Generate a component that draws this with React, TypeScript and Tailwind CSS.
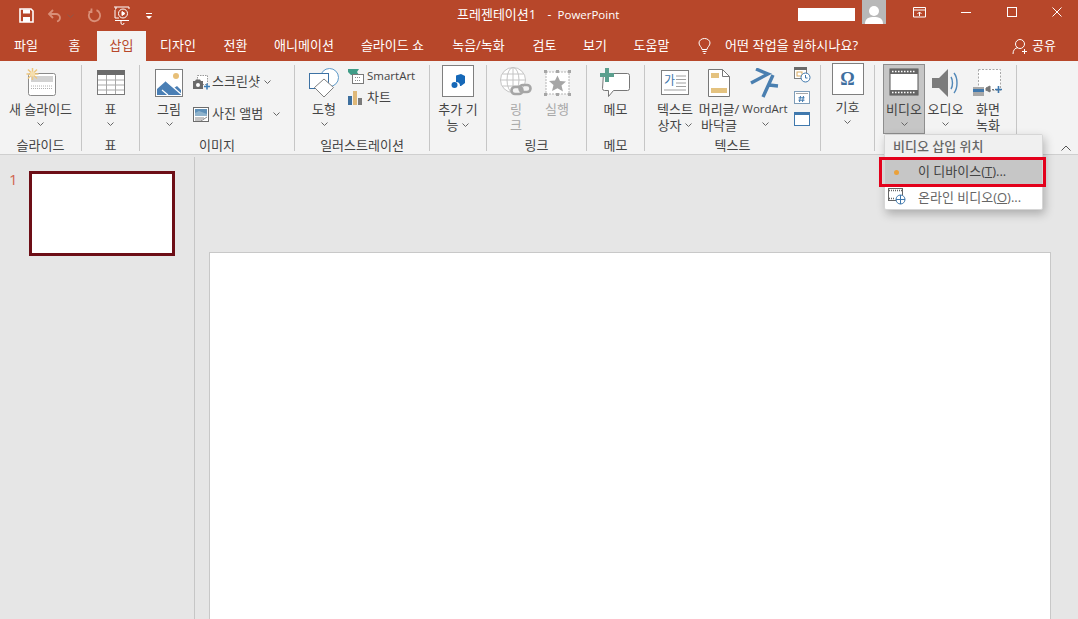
import type { ReactNode } from 'react'

const TABS = [
  { label: '파일', w: 'w-[52px]' },
  { label: '홈', w: 'w-[45px]' },
  { label: '삽입', w: 'w-[49px]', active: true },
  { label: '디자인', w: 'w-[64px]' },
  { label: '전환', w: 'w-[51px]' },
  { label: '애니메이션', w: 'w-[86px]' },
  { label: '슬라이드 쇼', w: 'w-[91px]' },
  { label: '녹음/녹화', w: 'w-[81px]' },
  { label: '검토', w: 'w-[51px]' },
  { label: '보기', w: 'w-[50px]' },
  { label: '도움말', w: 'w-[63px]' },
]

function Chev({ className = '' }: { className?: string }) {
  return (
    <svg width="7" height="4" viewBox="0 0 7 4" className={className} fill="none" stroke="#666" strokeWidth="1">
      <path d="M0.5 0.5 3.5 3.5 6.5 0.5" />
    </svg>
  )
}

function TitleBar() {
  return (
    <div className="flex h-[31px] items-start text-white">
      <div className="flex w-[457px] items-center pl-[19px] pt-[6px]">
        <svg width="15" height="15" viewBox="0 0 15 15">
          <path d="M1 1h11l2 2v11H1z" fill="none" stroke="#fff" strokeWidth="1.6" />
          <path d="M4 1.5h7v4H4zM4 9h7v5H4z" fill="#fff" />
        </svg>
        <svg width="16" height="14" viewBox="0 0 16 14" className="ml-[13px]" fill="none" stroke="#d98f78" strokeWidth="1.8">
          <path d="M6 1 2 5l4 4M2 5h7a4 4 0 0 1 4 4v0a4 4 0 0 1-3 3.500" />
        </svg>
        <Chev className="ml-[4px] opacity-50" />
        <svg width="15" height="15" viewBox="0 0 15 15" className="ml-[13px]" fill="none" stroke="#d98f78" strokeWidth="1.8">
          <path d="M9.500 2.200A5.700 5.700 0 1 1 4 3M4.500 0.500V4H1.500" />
        </svg>
        <svg width="18" height="19" viewBox="0 0 18 19" className="ml-[11px]" fill="none" stroke="#fff" strokeWidth="1">
          <path d="M1 1h15M3 1v2h-1M16 1v2" />
          <circle cx="10" cy="7.500" r="4.500" />
          <path d="M9 5.500v4l3-2z" fill="#fff" />
          <path d="M2 4v8h4M2 14.500h14M8 15v2a1.500 1.500 0 0 0 3 0" />
        </svg>
        <svg width="8" height="8" viewBox="0 0 8 8" className="ml-[14px]" fill="#fff">
          <path d="M1 1h6v1H1zM1 4h6L4 7z" />
        </svg>
      </div>
      <div className="flex items-center whitespace-pre pt-[6px] text-[13px] leading-[17px]">
        프레젠테이션1
        <span className="ml-[5px] text-[12px]">{'  -  '}</span>
        <span className="text-[11.5px]">PowerPoint</span>
      </div>
      <div className="ml-auto flex items-start">
        <div className="mt-[8px] h-[13px] w-[57px] bg-white" />
        <div className="ml-[7px] flex h-[24px] w-[24px] items-end justify-center overflow-hidden bg-[#b8b8b8]">
          <svg width="20" height="21" viewBox="0 0 20 21" fill="#fff">
            <circle cx="10" cy="8" r="5" />
            <path d="M1 21c0-6 4-7 9-7s9 1 9 7z" />
          </svg>
        </div>
        <svg width="14" height="11" viewBox="0 0 14 11" className="ml-[27px] mt-[7px]" fill="none" stroke="#fff" strokeWidth="1">
          <path d="M.5 .5h12v9.500h-12zM.5 3h12M6.500 9V5M4.500 7l2-2 2 2" />
        </svg>
        <div className="ml-[34px] mt-[12px] h-px w-[10px] bg-white" />
        <div className="ml-[36px] mt-[7px] h-[10px] w-[10px] border border-white" />
        <svg width="10" height="10" viewBox="0 0 10 10" className="ml-[35px] mr-[16px] mt-[7px]" stroke="#fff" strokeWidth="1">
          <path d="M.5 .5l9 9M9.500 .5l-9 9" />
        </svg>
      </div>
    </div>
  )
}

function TabBar() {
  return (
    <div className="flex h-[30px] text-white">
      {TABS.map((t) => (
        <div
          key={t.label}
          className={`${t.w} flex shrink-0 items-center justify-center text-[13px] ${t.active ? 'bg-[#f3f3f3] text-[#b7472a]' : ''}`}
        >
          {t.label}
        </div>
      ))}
      <svg width="13" height="16" viewBox="0 0 13 16" className="ml-[15px] mt-[7px]" fill="none" stroke="#fff" strokeWidth="1">
        <path d="M4 11.500C4 9 1 8 1 5a5.500 4.500 0 0 1 11 0c0 3-3 4-3 6.500zM4.500 13.500h4M5.500 15.500h2" />
      </svg>
      <div className="ml-[14px] flex items-center text-[13px] tracking-[0.1px]">어떤 작업을 원하시나요?</div>
      <div className="ml-auto mr-[22px] flex items-center">
        <svg width="16" height="17" viewBox="0 0 16 17" fill="none" stroke="#fff" strokeWidth="1">
          <circle cx="8" cy="6" r="4.500" />
          <path d="M1 16c0-4 2-6 5-6.500M10 13.500h5M12.500 11v5" />
        </svg>
        <span className="ml-[4px] text-[13px]">공유</span>
      </div>
    </div>
  )
}

function Group({ w, label, children }: { w: string; label?: string; children: ReactNode }) {
  return (
    <div className={`${w} flex h-[86px] shrink-0 flex-col border-r border-[#c6c6c6]`}>
      <div className="flex h-[71px]">{children}</div>
      <div className="flex h-[15px] items-center justify-center pt-[3px] text-[13px] leading-none">{label}</div>
    </div>
  )
}

function Big({
  w,
  icon,
  lines,
  chev,
  inlineChev,
  muted,
  boxed,
  latin,
}: {
  w: string
  icon: ReactNode
  lines: string[]
  chev?: boolean
  inlineChev?: boolean
  muted?: boolean
  boxed?: boolean
  latin?: boolean
}) {
  return (
    <div
      className={`${w} flex shrink-0 flex-col items-center ${muted ? 'text-[#a8a8a8]' : ''} ${
        boxed ? '-mt-px h-[70px] border border-[#8e8e8e] bg-[#c6c6c6]' : ''
      }`}
    >
      <div className="mb-px flex h-[35px] shrink-0 items-center justify-center">{icon}</div>
      {lines.map((l, i) => (
        <div key={l} className={`flex h-[16px] items-center whitespace-nowrap leading-none ${latin ? 'text-[11.5px]' : 'text-[13px]'}`}>
          {l}
          {inlineChev && i === lines.length - 1 && <Chev className="ml-[4px]" />}
        </div>
      ))}
      {chev && (
        <div className="flex h-[14px] items-center">
          <Chev />
        </div>
      )}
    </div>
  )
}

function Small({ icon, label, chevGap, latin }: { icon: ReactNode; label: string; chevGap?: string; latin?: boolean }) {
  return (
    <div className={`flex h-[20px] items-center whitespace-nowrap ${latin ? 'text-[11.5px]' : 'text-[13px]'}`}>
      <span className="flex w-[19px] shrink-0">{icon}</span>
      {label}
      {chevGap && <Chev className={chevGap} />}
    </div>
  )
}

const NewSlideIcon = (
  <svg width="30" height="29" viewBox="0 0 30 29">
    <rect x="2.500" y="5.500" width="27" height="22" rx="2" fill="#fff" stroke="#8a8a8a" />
    <rect x="5" y="8" width="22" height="6" fill="#d2d2d2" />
    <path d="M5 18h22M5 20.500h22" stroke="#b0b0b0" strokeDasharray="1 1" />
    <g stroke="#eec77f" strokeWidth="1.500">
      <path d="M6.500 0v12M.500 6h12M2 1.500l9 9M11 1.500l-9 9" />
    </g>
    <circle cx="6.500" cy="6" r="2.500" fill="#f6dfae" />
  </svg>
)

const TableIcon = (
  <svg width="28" height="25" viewBox="0 0 28 25">
    <rect x=".5" y=".5" width="27" height="24" fill="#fff" stroke="#7a7a7a" />
    <rect x="0" y="0" width="28" height="5" fill="#6b6b6b" />
    <path d="M9.500 5v19M18.500 5v19M1 10h26M1 15h26M1 20h26" stroke="#a8a8a8" />
  </svg>
)

const PictureIcon = (
  <svg width="28" height="28" viewBox="0 0 28 28">
    <rect x=".5" y=".5" width="27" height="27" fill="#fff" stroke="#7d7d7d" />
    <circle cx="21" cy="7" r="3" fill="#e7bf78" />
    <path d="M2 26v-6l9-8 8 7 3-2 4 4v5z" fill="#4a7fb5" />
    <path d="M13 26l-6-5M11 12l15 13" stroke="#fff" strokeWidth="1.200" fill="none" />
  </svg>
)

const ScreenshotIcon = (
  <svg width="17" height="15" viewBox="0 0 17 15">
    <rect x="4.500" y=".5" width="10" height="9" fill="#fff" stroke="#9a9a9a" strokeDasharray="1.500 1" />
    <path d="M0 6h2l1-1.500h4L8 6h2v8H0z" fill="#6a6a6a" />
    <circle cx="5" cy="10" r="2" fill="#fff" />
    <path d="M11 11.500h6M14 8.500v6" stroke="#3f7fb8" strokeWidth="1.600" />
  </svg>
)

const AlbumIcon = (
  <svg width="16" height="15" viewBox="0 0 16 15">
    <rect x=".5" y=".5" width="15" height="14" fill="#fff" stroke="#6c6c6c" />
    <rect x="2" y="2" width="12" height="7" fill="#5e90b8" />
    <path d="M2 6l4-2 8 3v2H2z" fill="#8fb3cc" />
    <path d="M2 11h9M2 13h7" stroke="#8a8a8a" />
    <path d="M8 14l6-4" stroke="#8a8a8a" />
  </svg>
)

const ShapesIcon = (
  <svg width="30" height="30" viewBox="0 0 30 30" fill="#fff">
    <circle cx="20.500" cy="9.500" r="9" stroke="#5f9ac9" />
    <rect x=".5" y="5.500" width="19" height="15" stroke="#3d72a4" />
    <path d="M15 11 24.500 19.500 15 29 5.500 19.500z" stroke="#7f7f7f" />
  </svg>
)

const SmartArtIcon = (
  <svg width="16" height="15" viewBox="0 0 16 15">
    <path d="M0 0h11l-2 3 2 3H3L0 3z" fill="#3f9c87" />
    <rect x="4.500" y="5.500" width="11" height="9" fill="#fff" stroke="#7a7a7a" />
    <path d="M7 8.500h6M7 11.500h6" stroke="#8a8a8a" strokeDasharray="1 1" />
  </svg>
)

const ChartIcon = (
  <svg width="14" height="14" viewBox="0 0 14 14">
    <rect x="0" y="5" width="4" height="9" fill="#3d6f9e" />
    <rect x="5" y="0" width="4" height="14" fill="#dfb878" />
    <rect x="10" y="7" width="4" height="7" fill="#7a7a7a" />
  </svg>
)

const AddinIcon = (
  <div className="-mt-[3px] flex h-[32px] w-[32px] items-center justify-center border border-[#7f7f7f] bg-white">
    <svg width="15" height="15" viewBox="0 0 15 15" fill="#1668b8">
      <path d="M5 1.500 10 0l4 2v7l-4 3H9a4 4 0 0 0-4-4z" />
      <circle cx="3.500" cy="11" r="3" />
    </svg>
  </div>
)

const LinkIcon = (
  <svg width="32" height="32" viewBox="0 0 32 32" fill="none">
    <g stroke="#c4c4c4">
      <circle cx="13" cy="13" r="12.500" fill="#fff" />
      <ellipse cx="13" cy="13" rx="6" ry="12.500" />
      <path d="M13 .5v25M.5 13h25M2.500 7h21M2.500 19h21" />
    </g>
    <g stroke="#a6a6a6" strokeWidth="2.600">
      <rect x="11.500" y="20" width="11" height="7" rx="3.500" fill="#f3f3f3" />
      <rect x="19.500" y="18" width="11" height="7" rx="3.500" />
    </g>
  </svg>
)

const ActionIcon = (
  <svg width="27" height="26" viewBox="0 0 27 26">
    <rect x="2" y="2" width="23" height="22" fill="#fff" stroke="#b5b5b5" strokeDasharray="2 1" />
    <path d="M13.500 5.500l2.500 5.500 6 .5-4.500 4 1.500 6-5.500-3.200L8 21l1.500-6-4.500-4 6-.5z" fill="#a6a6a6" />
    <g fill="#a6a6a6">
      <rect x="0" y="0" width="3" height="3" />
      <rect x="24" y="0" width="3" height="3" />
      <rect x="0" y="23" width="3" height="3" />
      <rect x="24" y="23" width="3" height="3" />
      <rect x="12" y="0" width="3" height="3" />
      <rect x="12" y="23" width="3" height="3" />
    </g>
  </svg>
)

const CommentIcon = (
  <svg width="31" height="30" viewBox="0 0 31 30">
    <path d="M3.500 5.500h24a2 2 0 0 1 2 2v13a2 2 0 0 1-2 2h-14l-5 6v-6h-4a2 2 0 0 1-2-2z" fill="#fff" stroke="#777" />
    <path d="M5 0h4v5h5v4H9v5H5V9H0V5h5z" fill="#5b9f8e" />
  </svg>
)

const TextBoxIcon = (
  <svg width="28" height="25" viewBox="0 0 28 25">
    <rect x=".5" y=".5" width="27" height="24" fill="#fff" stroke="#7f7f7f" />
    <text x="3" y="15" fontSize="12" fill="#3f78ad" fontFamily="'Noto Sans CJK KR'">가</text>
    <path d="M15 6h10M15 9.500h10M15 13h10M15 16.500h10M3 20h22" stroke="#a0a0a0" />
  </svg>
)

const HeaderIcon = (
  <svg width="22" height="28" viewBox="0 0 22 28">
    <path d="M.5 .5h14l7 7v20h-21z" fill="#fff" stroke="#777" />
    <path d="M14.500 .5v7h7" fill="none" stroke="#777" />
    <rect x="3" y="4" width="8" height="5" fill="#e4c27f" />
    <rect x="3" y="19" width="16" height="5" fill="#e4c27f" />
  </svg>
)

const WordArtIcon = (
  <svg width="31" height="30" viewBox="0 0 31 30" fill="none" stroke="#4a7fb0" strokeWidth="3.400" className="-ml-[2px]">
    <path d="M7 1 19 6 2 15" />
    <path d="M24 7 14 29M20 17l9 1" />
  </svg>
)

const DateIcon = (
  <svg width="17" height="16" viewBox="0 0 17 16">
    <rect x=".5" y=".5" width="12" height="11" fill="#fff" stroke="#7f7f7f" />
    <rect x="0" y="0" width="13" height="3" fill="#6a6a6a" />
    <rect x="3" y="5" width="5" height="4" fill="none" stroke="#d9ab62" />
    <circle cx="11.500" cy="10.500" r="4.500" fill="#fff" stroke="#3f78ad" />
    <path d="M11.500 8v3h2" fill="none" stroke="#3f78ad" />
  </svg>
)

const NumberIcon = (
  <svg width="16" height="13" viewBox="0 0 16 13">
    <rect x=".5" y=".5" width="15" height="12" fill="#fff" stroke="#7f9db8" />
    <path d="M2 2.500h12" stroke="#a8a8a8" />
    <path d="M6.500 5l-1 6M9.500 5l-1 6M4.500 6.800h6M4.500 9.200h6" stroke="#3f78ad" />
  </svg>
)

const ObjectIcon = (
  <svg width="16" height="14" viewBox="0 0 16 14">
    <rect x=".5" y=".5" width="15" height="13" fill="#fff" stroke="#3f78ad" />
    <rect x="0" y="0" width="16" height="3" fill="#3f78ad" />
  </svg>
)

const SymbolIcon = (
  <div className="-mt-[3px] flex h-[32px] w-[32px] items-center justify-center border border-[#7f7f7f] bg-white font-['Liberation_Serif',serif] text-[18px] font-bold text-[#3f6f9f]">
    Ω
  </div>
)

const VideoIcon = (
  <svg width="30" height="28" viewBox="0 0 30 28" className="-mt-px">
    <rect x="1" y="1" width="28" height="26" fill="#fff" stroke="#555" />
    <rect x="1" y="1" width="28" height="5" fill="#666" />
    <rect x="1" y="22" width="28" height="5" fill="#666" />
    <path d="M3 3.500h24M3 24.500h24" stroke="#fff" strokeWidth="1.500" strokeDasharray="1.500 1.500" />
  </svg>
)

const AudioIcon = (
  <svg width="27" height="28" viewBox="0 0 27 28" fill="none">
    <path d="M0 9h7l9-9v28l-9-9H0z" fill="#7c7c7c" />
    <path d="M19 8c2 3 2 9 0 12M22 4c4 5 4 15 0 20" stroke="#5288b8" strokeWidth="1.400" />
  </svg>
)

const ScreenRecIcon = (
  <svg width="30" height="28" viewBox="0 0 30 28" fill="none">
    <rect x="5.500" y=".5" width="22" height="21" fill="#fff" stroke="#a8a8a8" strokeDasharray="2 1.500" />
    <rect x="0" y="18" width="11" height="9" fill="#a8a8a8" />
    <rect x="0" y="20" width="11" height="3" fill="#3f78ad" />
    <path d="M13 19l4-2v6l-4-2zM19 20.500h2" fill="#777" stroke="#777" />
    <path d="M22 20.500h7M25.500 17v7" stroke="#3f78ad" strokeWidth="1.600" />
  </svg>
)

function Ribbon() {
  return (
    <div className="flex h-[94px] border-b border-[#cfcfcf] bg-[#f3f3f3] pt-[4px] text-[#444]">
      <Group w="w-[82px]" label="슬라이드">
        <Big w="w-[81px]" icon={NewSlideIcon} lines={['새 슬라이드']} chev />
      </Group>
      <Group w="w-[58px]" label="표">
        <Big w="w-[57px]" icon={TableIcon} lines={['표']} chev />
      </Group>
      <Group w="w-[155px]" label="이미지">
        <Big w="w-[58px]" icon={PictureIcon} lines={['그림']} chev />
        <div className="-ml-[5px] flex flex-col gap-[12px] pt-[7px]">
          <Small icon={ScreenshotIcon} label="스크린샷" chevGap="ml-[4px]" />
          <Small icon={AlbumIcon} label="사진 앨범" chevGap="ml-[10px]" />
        </div>
      </Group>
      <Group w="w-[135px]" label="일러스트레이션">
        <div className="w-[5px] shrink-0" />
        <Big w="w-[48px]" icon={ShapesIcon} lines={['도형']} chev />
        <div className="flex flex-col gap-[2px] pt-px">
          <Small icon={SmartArtIcon} label="SmartArt" latin />
          <Small icon={ChartIcon} label="차트" />
        </div>
      </Group>
      <Group w="w-[57px]">
        <Big w="w-[56px]" icon={AddinIcon} lines={['추가 기', '능']} inlineChev />
      </Group>
      <Group w="w-[100px]" label="링크">
        <div className="w-[8px] shrink-0" />
        <Big w="w-[42px]" icon={LinkIcon} lines={['링', '크']} muted />
        <Big w="w-[40px]" icon={ActionIcon} lines={['실행']} muted />
      </Group>
      <Group w="w-[58px]" label="메모">
        <Big w="w-[57px]" icon={CommentIcon} lines={['메모']} />
      </Group>
      <Group w="w-[176px]" label="텍스트">
        <div className="w-[7px] shrink-0" />
        <Big w="w-[46px]" icon={TextBoxIcon} lines={['텍스트', '상자']} inlineChev />
        <Big w="w-[42px]" icon={HeaderIcon} lines={['머리글/', '바닥글']} />
        <Big w="w-[50px]" icon={WordArtIcon} lines={['WordArt']} chev latin />
        <div className="ml-[4px] flex flex-col items-start gap-[8px] pt-[2px]">
          {DateIcon}
          {NumberIcon}
          {ObjectIcon}
        </div>
      </Group>
      <Group w="w-[54px]">
        <div className="-mt-[2px] w-[53px]">
          <Big w="w-[53px]" icon={SymbolIcon} lines={['기호']} chev />
        </div>
      </Group>
      <Group w="w-[142px]">
        <div className="w-[8px] shrink-0" />
        <Big w="w-[42px]" icon={VideoIcon} lines={['비디오']} chev boxed />
        <Big w="w-[41px]" icon={AudioIcon} lines={['오디오']} chev />
        <Big w="w-[44px]" icon={ScreenRecIcon} lines={['화면', '녹화']} />
      </Group>
      <div className="ml-auto mr-[7px] flex items-end pb-[3px]">
        <svg width="10" height="6" viewBox="0 0 10 6" fill="none" stroke="#555">
          <path d="M.5 5.500 5 1l4.500 4.500" />
        </svg>
      </div>
    </div>
  )
}

function VideoMenu() {
  return (
    <div className="absolute left-[884px] top-[134px] z-10 w-[159px] rounded-[2px] border border-[#d6d6d6] bg-white text-[13px] shadow-[2px_4px_10px_rgba(0,0,0,0.25)]">
      <div className="flex h-[23px] items-center bg-[#f0f0f0] pl-[8px] font-medium text-[#666]">비디오 삽입 위치</div>
      <div className="relative flex h-[28px] items-center bg-[#c6c6c6] text-[#444]">
        <span className="ml-[9px] h-[5px] w-[5px] rounded-full bg-[#eba13a]" />
        <span className="ml-[19px]">
          이 디바이스(<span className="underline">T</span>)...
        </span>
        <div className="absolute -bottom-[1px] -left-[6px] -right-[4px] -top-[1px] border-[3px] border-[#e3001b]" />
      </div>
      <div className="flex h-[23px] items-center text-[#666]">
        <svg width="18" height="17" viewBox="0 0 18 17" className="mb-[2px] ml-[3px]">
          <rect x=".5" y=".5" width="14" height="12" fill="#fff" stroke="#666" />
          <path d="M1 2.500h13M1 10.500h6" stroke="#666" strokeWidth="1.500" strokeDasharray="1 1" />
          <circle cx="12.500" cy="11.500" r="4.500" fill="#fff" stroke="#3f78ad" />
          <path d="M8 11.500h9M12.500 7v9" stroke="#3f78ad" />
        </svg>
        <span className="ml-[12px]">
          온라인 비디오(<span className="underline">O</span>)...
        </span>
      </div>
    </div>
  )
}

export default function App() {
  return (
    <div className="relative flex h-[619px] w-[1078px] flex-col overflow-hidden bg-[#b7472a] font-['Open_Sans','Noto_Sans_CJK_KR',sans-serif]">
      <TitleBar />
      <TabBar />
      <Ribbon />
      <div className="flex min-h-0 flex-1 bg-[#e6e6e6] pt-[2px]">
        <div className="flex w-[195px] shrink-0 items-start border-r border-[#c6c6c6] pl-[9px] pt-[12px]">
          <span className="w-[9px] text-[15px] leading-[20px] text-[#d0644f]">1</span>
          <div className="ml-[11px] mt-[2px] h-[85px] w-[146px] border-[3px] border-[#6d0e16] bg-white" />
        </div>
        <div className="min-w-0 flex-1 pl-[14px] pt-[95px]">
          <div className="h-[420px] w-[842px] border border-[#c8c8c8] bg-white" />
        </div>
      </div>
      <VideoMenu />
    </div>
  )
}
